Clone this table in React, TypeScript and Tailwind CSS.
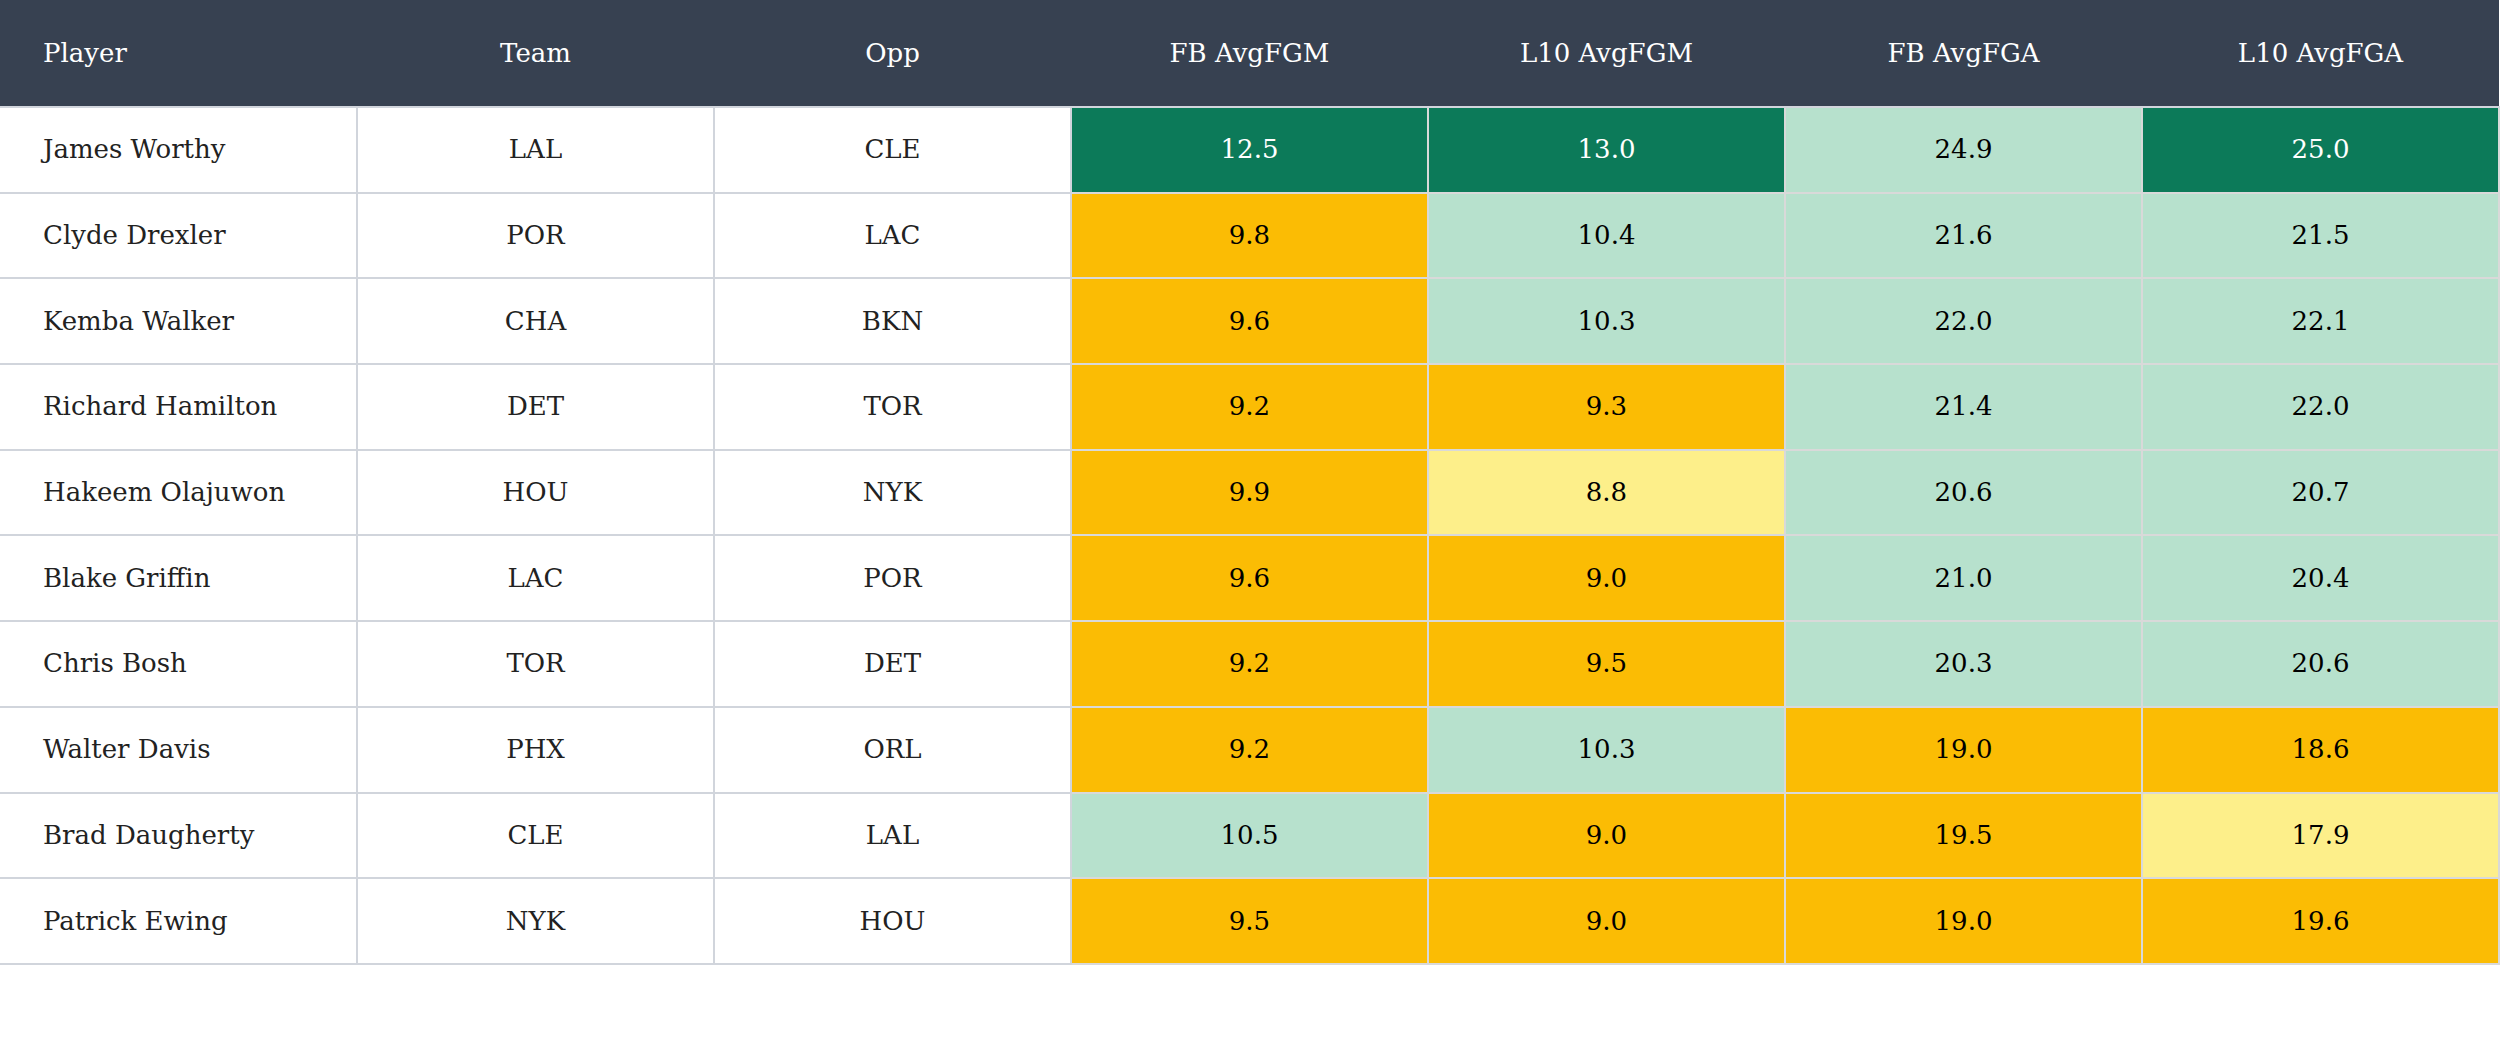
import React from 'react';

type Tone = 'dg' | 'lg' | 'am' | 'ly';

interface Row {
  player: string;
  team: string;
  opp: string;
  stats: [string, Tone][];
}

const rows: Row[] = [
  { player: 'James Worthy', team: 'LAL', opp: 'CLE', stats: [['12.5', 'dg'], ['13.0', 'dg'], ['24.9', 'lg'], ['25.0', 'dg']] },
  { player: 'Clyde Drexler', team: 'POR', opp: 'LAC', stats: [['9.8', 'am'], ['10.4', 'lg'], ['21.6', 'lg'], ['21.5', 'lg']] },
  { player: 'Kemba Walker', team: 'CHA', opp: 'BKN', stats: [['9.6', 'am'], ['10.3', 'lg'], ['22.0', 'lg'], ['22.1', 'lg']] },
  { player: 'Richard Hamilton', team: 'DET', opp: 'TOR', stats: [['9.2', 'am'], ['9.3', 'am'], ['21.4', 'lg'], ['22.0', 'lg']] },
  { player: 'Hakeem Olajuwon', team: 'HOU', opp: 'NYK', stats: [['9.9', 'am'], ['8.8', 'ly'], ['20.6', 'lg'], ['20.7', 'lg']] },
  { player: 'Blake Griffin', team: 'LAC', opp: 'POR', stats: [['9.6', 'am'], ['9.0', 'am'], ['21.0', 'lg'], ['20.4', 'lg']] },
  { player: 'Chris Bosh', team: 'TOR', opp: 'DET', stats: [['9.2', 'am'], ['9.5', 'am'], ['20.3', 'lg'], ['20.6', 'lg']] },
  { player: 'Walter Davis', team: 'PHX', opp: 'ORL', stats: [['9.2', 'am'], ['10.3', 'lg'], ['19.0', 'am'], ['18.6', 'am']] },
  { player: 'Brad Daugherty', team: 'CLE', opp: 'LAL', stats: [['10.5', 'lg'], ['9.0', 'am'], ['19.5', 'am'], ['17.9', 'ly']] },
  { player: 'Patrick Ewing', team: 'NYK', opp: 'HOU', stats: [['9.5', 'am'], ['9.0', 'am'], ['19.0', 'am'], ['19.6', 'am']] },
];

const toneClass: Record<Tone, string> = {
  dg: 'bg-[#0c7a59] text-white',
  lg: 'bg-[#b7e1cd] text-black',
  am: 'bg-[#fbbc04] text-black',
  ly: 'bg-[#fdef8a] text-black',
};

const headers = ['Team', 'Opp', 'FB AvgFGM', 'L10 AvgFGM', 'FB AvgFGA', 'L10 AvgFGA'];

export default function App() {
  return (
    <div className="w-[2500px] h-[1050px] bg-white font-['DejaVu_Serif',serif] text-[26px]">
      <table className="w-full table-fixed border-collapse">
        <thead>
          <tr className="bg-[#374151] text-white h-[107px]">
            <th className="text-left font-normal pl-[43px] border-b-2 border-gray-300">Player</th>
            {headers.map(h => (
              <th key={h} className="font-normal text-center border-b-2 border-gray-300">{h}</th>
            ))}
          </tr>
        </thead>
        <tbody>
          {rows.map(r => (
            <tr key={r.player} className="h-[85.7px]">
              <td className="pl-[43px] text-left text-[#222] border-2 border-gray-300 border-l-0">{r.player}</td>
              <td className="text-center text-[#222] border-2 border-gray-300">{r.team}</td>
              <td className="text-center text-[#222] border-2 border-gray-300">{r.opp}</td>
              {r.stats.map(([v, t], i) => (
                <td key={i} className={`text-center border-2 border-[#d9d9d9] ${toneClass[t]}`}>{v}</td>
              ))}
            </tr>
          ))}
        </tbody>
      </table>
    </div>
  );
}
